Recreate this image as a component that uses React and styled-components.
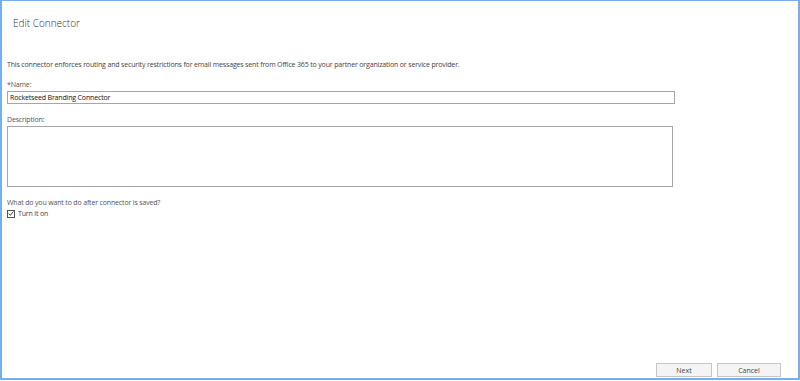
import React, { useState } from 'react';
import styled, { createGlobalStyle } from 'styled-components';

const GlobalStyle = createGlobalStyle`
  html, body {
    margin: 0;
    padding: 0;
    background: #ffffff;
  }
  body {
    font-family: "Segoe UI", "Open Sans", "Noto Sans", sans-serif;
    color: #333;
  }
`;

function App() {
  const [turnOn, setTurnOn] = useState(true);
  const [name, setName] = useState('Rocketseed Branding Connector');

  return (
    <>
      <GlobalStyle />
      <Frame>
        <Header>
          <Title>Edit Connector</Title>
        </Header>

        <Body>
          <Intro>
            This connector enforces routing and security restrictions for email messages sent from Office 365 to
            your partner organization or service provider.
          </Intro>

          <Field>
            <Label>*Name:</Label>
            <TextInput value={name} onChange={(e) => setName(e.target.value)} />
          </Field>

          <Field>
            <Label>Description:</Label>
            <TextArea />
          </Field>

          <Field>
            <Label>What do you want to do after connector is saved?</Label>
            <CheckRow onClick={() => setTurnOn(!turnOn)}>
              <CheckBox>
                {turnOn && (
                  <svg width="7" height="7" viewBox="0 0 7 7">
                    <path d="M0.8 3.6 L2.8 5.6 L6.3 1.2" fill="none" stroke="#333" strokeWidth="1.1" />
                  </svg>
                )}
              </CheckBox>
              <CheckLabel>Turn it on</CheckLabel>
            </CheckRow>
          </Field>
        </Body>

        <Footer>
          <Button>Next</Button>
          <Button $wide>Cancel</Button>
        </Footer>
      </Frame>
    </>
  );
}

export default App;

const Frame = styled.div`
  box-sizing: border-box;
  width: 800px;
  height: 380px;
  border-top: 1px solid #7aaee8;
  border-right: 2px solid #7aaee8;
  border-left: 2px solid #7aaee8;
  border-bottom: 2px solid #7aaee8;
  display: flex;
  flex-direction: column;
`;

const Header = styled.div`
  padding: 15px 0 0 11px;
  height: 40px;
  box-sizing: border-box;
`;

const Title = styled.h1`
  margin: 0;
  font-size: 10px;
  font-weight: 300;
  color: #333;
  line-height: 14px;
`;

const Body = styled.div`
  flex: 1;
  padding: 18px 0 0 5px;
  display: flex;
  flex-direction: column;
  font-size: 7px;
  letter-spacing: -0.16px;
`;

const Intro = styled.p`
  margin: 0 0 8px;
  line-height: 12px;
  color: #444;
`;

const Field = styled.div`
  display: flex;
  flex-direction: column;
  margin-bottom: 10px;
`;

const Label = styled.label`
  line-height: 12px;
  color: #555;
`;

const TextInput = styled.input`
  box-sizing: border-box;
  width: 668px;
  height: 13px;
  border: 1px solid #a6a6a6;
  padding: 0 2px;
  font-family: inherit;
  font-size: 7px;
  letter-spacing: -0.16px;
  color: #111;
  outline: none;
`;

const TextArea = styled.textarea`
  box-sizing: border-box;
  width: 666px;
  height: 61px;
  border: 1px solid #a6a6a6;
  resize: none;
  outline: none;
  font-family: inherit;
  font-size: 7px;
`;

const CheckRow = styled.div`
  display: flex;
  align-items: center;
  gap: 3px;
  cursor: pointer;
`;

const CheckBox = styled.span`
  box-sizing: border-box;
  width: 8px;
  height: 8px;
  border: 1px solid #555;
  display: flex;
  align-items: center;
  justify-content: center;
  background: #fff;
`;

const CheckLabel = styled.span`
  color: #444;
`;

const Footer = styled.div`
  display: flex;
  justify-content: flex-end;
  gap: 5px;
  padding: 0 17px 1px 0;
`;

const Button = styled.button`
  box-sizing: border-box;
  width: ${(p) => (p.$wide ? '64px' : '56px')};
  height: 14px;
  border: 1px solid #c6c6c6;
  background: #f4f4f4;
  font-family: inherit;
  font-size: 7px;
  color: #444;
  padding: 0;
  cursor: pointer;
`;
